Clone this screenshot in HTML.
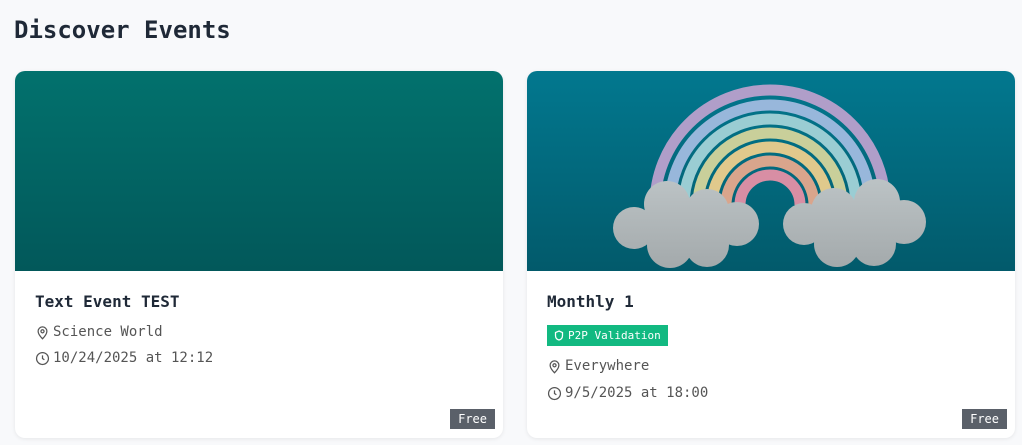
<!DOCTYPE html>
<html><head><style>
body{margin:0;background:#f8f9fb;font-family:"DejaVu Sans Mono","Liberation Mono",monospace;width:1022px;height:445px;overflow:hidden;position:relative}
h1{position:absolute;left:14px;top:16px;margin:0;font-size:24px;font-weight:bold;color:#1f2937}
.card{position:absolute;top:71px;width:488px;height:367px;background:#fff;border-radius:10px;box-shadow:0 1px 4px rgba(0,0,0,.08);overflow:hidden}
.img{height:200px}
.t{position:absolute;left:20px;top:221px;font-size:16px;font-weight:bold;color:#1f2937}
.m{position:absolute;left:20px;font-size:14px;color:#555;display:flex;align-items:center;gap:3px}
.free{position:absolute;right:8px;bottom:9px;background:#5a6069;color:#fff;font-size:12px;padding:2px 8px;line-height:16px}
.badge{position:absolute;left:20px;top:254px;background:#12b981;color:#fff;font-size:11px;padding:2px 7px 2px 7px;line-height:17px;display:flex;align-items:center;gap:4px}
</style></head><body>
<h1>Discover Events</h1>
<div class="card" style="left:15px">
<div class="img" style="background:linear-gradient(#02716d,#02585a)"></div>
<div class="t">Text Event TEST</div>
<div class="m" style="top:253px"><svg width="15" height="15" viewBox="0 0 24 24" fill="none" stroke="#555" stroke-width="2"><path d="M12 22s7-7 7-12a7 7 0 0 0-14 0c0 5 7 12 7 12z"/><circle cx="12" cy="10" r="2.5"/></svg>Science World</div>
<div class="m" style="top:279px"><svg width="15" height="15" viewBox="0 0 24 24" fill="none" stroke="#555" stroke-width="2"><circle cx="12" cy="12" r="9.5"/><path d="M12 7v5l3 2"/></svg>10/24/2025 at 12:12</div>
<div class="free">Free</div>
</div>
<div class="card" style="left:527px">
<div class="img" style="background:linear-gradient(#02788f,#025a6b)">
<svg width="488" height="200" viewBox="0 0 488 200">
<defs><linearGradient id="c" gradientUnits="userSpaceOnUse" x1="0" y1="108" x2="0" y2="198"><stop offset="0" stop-color="#bcc3c5"/><stop offset="1" stop-color="#a3a9ab"/></linearGradient></defs>
<g fill="none" stroke-width="11">
<path d="M128 134A115 115 0 0 1 358 134" stroke="#b09ec9"/>
<path d="M143 134A100 100 0 0 1 343 134" stroke="#98b7db"/>
<path d="M157 134A86 86 0 0 1 329 134" stroke="#9acdd3"/>
<path d="M171 134A72 72 0 0 1 315 134" stroke="#c9cf9a"/>
<path d="M185 134A58 58 0 0 1 301 134" stroke="#e0c98c"/>
<path d="M199 134A44 44 0 0 1 287 134" stroke="#d9a58c"/>
<path d="M213 134A30 30 0 0 1 273 134" stroke="#d88ea4"/>
</g>
<g fill="url(#c)">
<circle cx="140" cy="133" r="23"/><circle cx="180" cy="140" r="22"/><circle cx="107" cy="157" r="21"/><circle cx="210" cy="153" r="22"/><circle cx="143" cy="174" r="23"/><circle cx="180" cy="174" r="22"/><rect x="110" y="140" width="100" height="30"/>
<circle cx="350" cy="131" r="23"/><circle cx="307" cy="140" r="23"/><circle cx="277" cy="153" r="21"/><circle cx="377" cy="151" r="22"/><circle cx="310" cy="173" r="23"/><circle cx="347" cy="173" r="22"/><rect x="280" y="140" width="95" height="30"/>
</g></svg></div>
<div class="t">Monthly 1</div>
<div class="badge"><svg width="10" height="11" viewBox="0 0 20 22" fill="none" stroke="#fff" stroke-width="2.5"><path d="M10 2l7 3v6c0 5-3 8-7 9-4-1-7-4-7-9V5z"/></svg>P2P Validation</div>
<div class="m" style="top:287px"><svg width="15" height="15" viewBox="0 0 24 24" fill="none" stroke="#555" stroke-width="2"><path d="M12 22s7-7 7-12a7 7 0 0 0-14 0c0 5 7 12 7 12z"/><circle cx="12" cy="10" r="2.5"/></svg>Everywhere</div>
<div class="m" style="top:314px"><svg width="15" height="15" viewBox="0 0 24 24" fill="none" stroke="#555" stroke-width="2"><circle cx="12" cy="12" r="9.5"/><path d="M12 7v5l3 2"/></svg>9/5/2025 at 18:00</div>
<div class="free">Free</div>
</div>
</body></html>
